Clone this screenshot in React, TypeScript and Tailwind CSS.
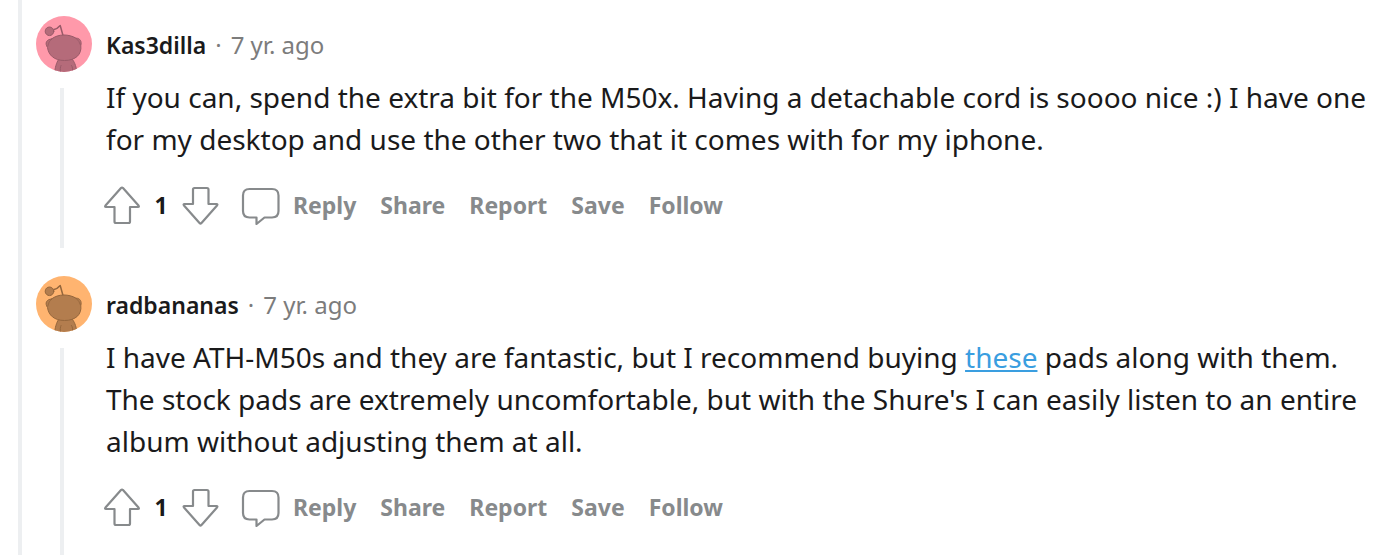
import type { ReactNode } from 'react'

type CommentData = {
  author: string
  age: string
  score: number
  bg: string
  snoo: string
  outline: string
  body: ReactNode
}

const comments: CommentData[] = [
  {
    author: 'Kas3dilla',
    age: '7 yr. ago',
    score: 1,
    bg: '#ff99aa',
    snoo: '#b56b7a',
    outline: '#985a68',
    body: 'If you can, spend the extra bit for the M50x. Having a detachable cord is soooo nice :) I have one for my desktop and use the other two that it comes with for my iphone.'
  },
  {
    author: 'radbananas',
    age: '7 yr. ago',
    score: 1,
    bg: '#ffb470',
    snoo: '#b37d4e',
    outline: '#94663c',
    body: (
      <>
        I have ATH-M50s and they are fantastic, but I recommend buying{' '}
        <a href="#pads" className="text-[#3a9ee0] underline decoration-2 underline-offset-2">these</a>{' '}
        pads along with them. The stock pads are extremely uncomfortable, but with the Shure's I can
        easily listen to an entire album without adjusting them at all.
      </>
    )
  }
]

const actions = ['Share', 'Report', 'Save', 'Follow']

function Avatar({ bg, snoo, outline }: { bg: string; snoo: string; outline: string }) {
  return (
    <svg className="size-14 shrink-0 rounded-full" viewBox="0 0 56 56" aria-hidden="true">
      <rect width="56" height="56" fill={bg} />
      <g fill={snoo} stroke={outline} strokeWidth="1" strokeLinecap="round" strokeLinejoin="round">
        <path d="M18 13.5C20.5 13 22.5 11.5 24.2 9.5L27 19.5" fill="none" strokeWidth="1.5" />
        <circle cx="13.5" cy="15.3" r="4.3" />
        <path d="M18.5 58C19 51 20.5 47 22.5 43.5H36.500C39 47 40.5 51 41 58Z" />
        <path d="M24.5 57C24 53 24.3 51 25 49.5M36.5 57C37 53 36.5 51 35.5 49.5" fill="none" />
        <path d="M15.5 23C19 20.3 23 19 28 19C32 19 36.5 20 40 22.2C44 22 46 25.5 44.8 29.5C46 38.5 39.5 44.5 28.5 44.5C18 44.5 12.5 39 11.5 31.5C8.5 27 10.5 23.3 15.5 23Z" />
        <path d="M15.5 23Q12.5 25.5 11.8 30M40 22.2Q43.5 25 44.5 29" fill="none" strokeWidth="0.8" />
      </g>
    </svg>
  )
}

const arrows = {
  up: 'M19 3Q20 2 21 3L36.5 20.5Q37.5 22 36 22H28V36.5Q28 38 26.5 38H14Q12.5 38 12.5 36.5V22H4Q2.500 22 3.500 20.5Z',
  down: 'M19.5 38Q20.5 39 21.5 38L37 20.5Q38 19 36.5 19H28.5V4.5Q28.5 3 27 3H14.500Q13 3 13 4.5V19H4.5Q3 19 4 20.5Z'
}

function Icon({ d }: { d: string }) {
  return (
    <svg className="size-10" viewBox="0 0 40 40" fill="none" stroke="currentColor" strokeWidth="2.2" strokeLinejoin="round" aria-hidden="true">
      <path d={d} />
    </svg>
  )
}

function Comment({ comment, last }: { comment: CommentData; last: boolean }) {
  return (
    <article className={`flex gap-3.5 ${last ? 'grow' : ''}`}>
      <div className="flex flex-col gap-4">
        <Avatar bg={comment.bg} snoo={comment.snoo} outline={comment.outline} />
        <div className="ml-6 w-1 grow bg-[#edeff1]" />
      </div>
      <div className="min-w-0 flex-1 pb-[18px]">
        <header className="mb-0.5 flex h-[58px] items-center gap-[9px] text-2xl text-[#7c7c7c]">
          <a href="#user" className="text-[23px] font-semibold text-[#1a1a1b]">{comment.author}</a>
          <span>·</span>
          <time>{comment.age}</time>
        </header>
        <p className="text-[28px] leading-[42px] text-[#1a1a1b]">{comment.body}</p>
        <div className="mt-5 flex h-[50px] items-center gap-6 text-[23px] font-bold text-[#878a8c]">
          <div className="flex items-center gap-[7px]">
            <button type="button" aria-label="Upvote" className="-ml-1"><Icon d={arrows.up} /></button>
            <span className="w-6 text-center text-[#1a1a1b]">{comment.score}</span>
            <button type="button" aria-label="Downvote"><Icon d={arrows.down} /></button>
          </div>
          <button type="button" className="-ml-[3px] flex items-center gap-3">
            <Icon d="M8.5 4H31Q37.5 4 37.5 10.5V26Q37.5 32.5 31 32.5H23.5L15.5 39V32.5H8.5Q2 32.5 2 26V10.5Q2 4 8.5 4Z" />
            Reply
          </button>
          {actions.map((a) => (
            <button key={a} type="button">{a}</button>
          ))}
        </div>
      </div>
    </article>
  )
}

export default function App() {
  return (
    <main className="flex min-h-screen bg-white pl-[18px] font-['Noto_Sans',sans-serif]">
      <div className="flex flex-1 flex-col gap-7 border-l-4 border-[#edeff1] pt-4 pr-5 pl-3.5">
        {comments.map((c, i) => (
          <Comment key={c.author} comment={c} last={i === comments.length - 1} />
        ))}
      </div>
    </main>
  )
}
